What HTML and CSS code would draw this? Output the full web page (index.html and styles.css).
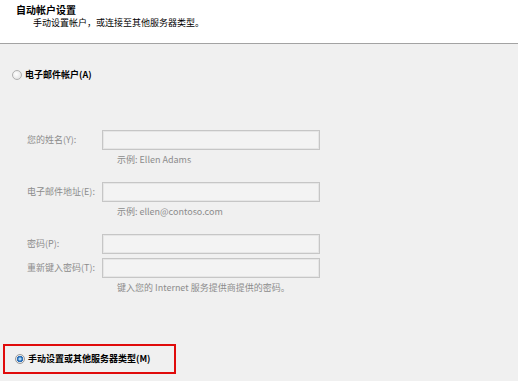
FILE: index.html
```html
<!DOCTYPE html>
<html lang="zh-CN">
<head>
<meta charset="utf-8">
<link rel="stylesheet" href="styles.css">
</head>
<body>
<div class="header">
  <div class="title">自动帐户设置</div>
  <div class="subtitle">手动设置帐户，或连接至其他服务器类型。</div>
</div>
<div class="main">
  <div class="option first">
    <span class="radio"></span>
    <span class="opt-label">电子邮件帐户(A)</span>
  </div>
  <div class="form">
    <div class="field"><span class="label">您的姓名(Y):</span><span class="input"></span></div>
    <div class="hint">示例: Ellen Adams</div>
    <div class="field gap-big"><span class="label">电子邮件地址(E):</span><span class="input"></span></div>
    <div class="hint">示例: ellen@contoso.com</div>
    <div class="field gap-big"><span class="label">密码(P):</span><span class="input"></span></div>
    <div class="field gap-small"><span class="label">重新键入密码(T):</span><span class="input"></span></div>
    <div class="hint">键入您的 Internet 服务提供商提供的密码。</div>
  </div>
  <div class="highlight">
    <div class="option">
      <span class="radio checked"></span>
      <span class="opt-label">手动设置或其他服务器类型(M)</span>
    </div>
  </div>
</div>
</body>
</html>
```
FILE: styles.css
```css
html, body {
  margin: 0;
  padding: 0;
}
body {
  width: 518px;
  height: 381px;
  overflow: hidden;
  background: #f0f0f0;
  font-family: "Noto Sans CJK SC", "Liberation Sans", sans-serif;
  color: #000;
}
.header {
  height: 44px;
  box-sizing: border-box;
  background: #fff;
  border-bottom: 1px solid #a3a3a3;
  padding: 3px 0 0 16px;
}
.title {
  font-size: 10px;
  font-weight: bold;
  line-height: 13px;
}
.subtitle {
  padding-left: 17px;
  font-size: 9px;
  line-height: 13px;
}
.option {
  display: flex;
  align-items: center;
  height: 12px;
}
.option.first {
  margin-top: 25px;
  padding-left: 12px;
}
.radio {
  width: 10px;
  height: 10px;
  box-sizing: border-box;
  border-radius: 50%;
  border: 1px solid #b0b0b0;
  background: radial-gradient(circle at 40% 40%, #ffffff, #dcdcdc);
  margin-right: 3px;
  flex: none;
}
.radio.checked {
  background: radial-gradient(circle, #a8d6f7 0 1.2px, #2b6fb8 1.9px 3px, #e8e8e8 3.3px);
  border-color: #999;
}
.opt-label {
  font-size: 9px;
  font-weight: bold;
  line-height: 12px;
}
.form {
  margin-top: 49px;
  padding-left: 27px;
}
.field {
  display: flex;
  align-items: center;
  height: 20px;
}
.field.gap-big {
  margin-top: 16px;
}
.field.gap-small {
  margin-top: 4px;
}
.label {
  width: 75px;
  font-size: 9px;
  color: #8c8c8c;
  line-height: 12px;
}
.input {
  width: 218px;
  height: 20px;
  box-sizing: border-box;
  border: 1px solid #c6c6c6;
  box-shadow: inset 0 0 0 1px #e6e6e6;
  background: #f3f3f3;
}
.hint {
  margin: 4px 0 0 90px;
  font-size: 9px;
  line-height: 12px;
  color: #8c8c8c;
}
.highlight {
  margin: 50px 0 0 3px;
  width: 173px;
  height: 30px;
  box-sizing: border-box;
  border: 2px solid #e00b0b;
  display: flex;
  align-items: center;
  padding-left: 10px;
}
```
